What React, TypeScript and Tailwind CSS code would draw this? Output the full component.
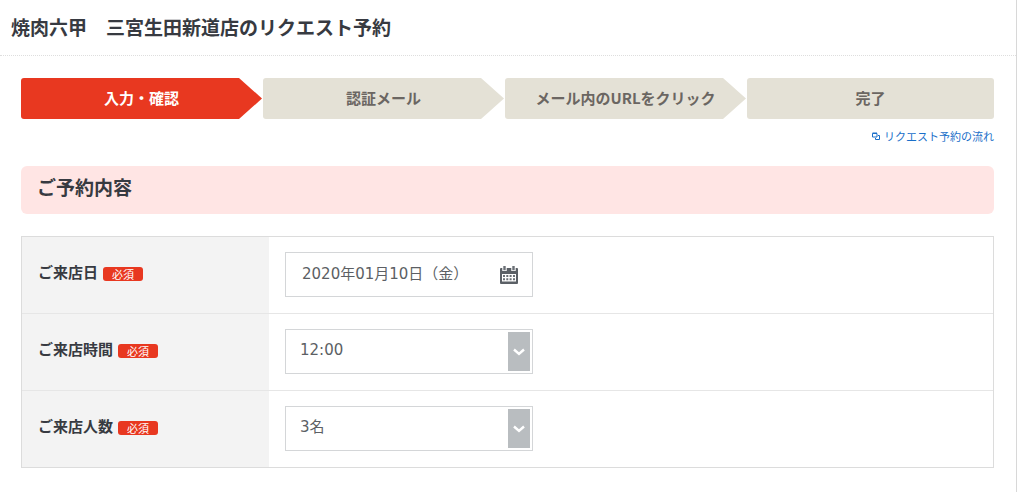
import type { ReactNode } from "react";

const steps = ["入力・確認", "認証メール", "メール内のURLをクリック", "完了"];

function stepClass(index: number) {
  const base =
    "flex h-[41px] items-center justify-center rounded-[3px] text-[15px] font-bold whitespace-nowrap";
  if (index === 0) {
    return `${base} bg-[#e83820] text-white [clip-path:polygon(0_0,calc(100%-23px)_0,100%_50%,calc(100%-23px)_100%,0_100%)]`;
  }
  if (index === steps.length - 1) {
    return `${base} bg-[#e4e1d6] text-[#6b6662]`;
  }
  return `${base} bg-[#e4e1d6] text-[#6b6662] [clip-path:polygon(0_0,calc(100%-23px)_0,100%_50%,calc(100%-23px)_100%,0_100%)]`;
}

function CalendarIcon() {
  return (
    <svg width="20" height="18" viewBox="0 0 20 18" aria-hidden="true">
      <path d="M2 2h16q1 0 1 1v14q0 1-1 1H2q-1 0-1-1V3q0-1 1-1z" fill="#5b6066" />
      <path d="M3 8h14v7.500H3z" fill="#fff" />
      <path d="M3.300 0h4.400v5H3.300zM12.300 0h4.400v5h-4.400z" fill="#fff" />
      <path d="M4.300 0h2.400v4.200H4.300zM13.300 0h2.400v4.200h-2.400z" fill="#6b7076" />
      <path
        d="M4 9h2v2H4zM7.300 9h2v2h-2zM10.600 9h2v2h-2zM14 9h2v2h-2zM4 12.300h2v2H4zM7.300 12.300h2v2h-2zM10.600 12.300h2v2h-2zM14 12.300h2v2h-2z"
        fill="#6b7076"
      />
    </svg>
  );
}

function WindowIcon() {
  return (
    <svg width="8" height="8" viewBox="0 0 8 8" fill="none" stroke="#1a6fc9" aria-hidden="true">
      <path d="M.5 1.500h4.500v3.500H.5zM.5 1h4.500" />
      <path d="M6 3.500h1.500v4H3.500V6" />
    </svg>
  );
}

function Row({ id, label, last, children }: { id: string; label: string; last?: boolean; children: ReactNode }) {
  const line = last ? "" : "border-b border-[#e6e6e6]";
  return (
    <tr>
      <th scope="row" className={`w-[247px] bg-[#f3f3f3] pb-[6px] pl-4 text-left align-middle ${line}`}>
        <div className="flex items-center gap-[5px]">
          <label htmlFor={id} className="text-[15px] leading-5 font-bold">
            {label}
          </label>
          <span className="mt-1 flex h-[14px] w-10 items-center justify-center rounded-[3px] bg-[#e83820] text-[11px] leading-none font-normal text-white">
            必須
          </span>
        </div>
      </th>
      <td className={`px-4 pt-[15px] pb-4 ${line}`}>
        <div className="relative w-[248px]">{children}</div>
      </td>
    </tr>
  );
}

const fieldClass =
  "block h-[45px] w-full appearance-none border border-[#d4d6d8] bg-white font-['DejaVu_Sans','Noto_Sans_CJK_JP',sans-serif] text-[15px] text-[#5c5f64] outline-none";

function Select({ id, options }: { id: string; options: string[] }) {
  return (
    <>
      <select id={id} className={`${fieldClass} pr-7 pb-0.5 pl-[14px]`}>
        {options.map((o) => (
          <option key={o}>{o}</option>
        ))}
      </select>
      <span className="pointer-events-none absolute inset-y-[3px] right-[3px] flex w-[22px] items-center justify-center bg-[#b9bdc0]">
        <svg width="12" height="8" viewBox="0 0 12 8" fill="none" stroke="#fff" strokeWidth="2.400" aria-hidden="true">
          <path d="M1 1.500 6 6l5-4.500" />
        </svg>
      </span>
    </>
  );
}

export default function App() {
  return (
    <div className="min-h-screen bg-white pr-[7px] font-['Noto_Sans_CJK_JP',sans-serif] text-[#373a41]">
      <div className="min-h-screen border-r border-[#d8d8d8]">
        <h1 className="flex h-14 items-center border-b border-dotted border-[#dedede] pl-[11px] text-[19px] font-bold">
          焼肉六甲　三宮生田新道店のリクエスト予約
        </h1>
        <main className="pt-[22px] pr-[22px] pb-6 pl-[21px]">
          <ol className="grid grid-cols-[241fr_241fr_241fr_247fr] gap-px">
            {steps.map((s, i) => (
              <li key={s} aria-current={i === 0 ? "step" : undefined} className={stepClass(i)}>
                {s}
              </li>
            ))}
          </ol>
          <div className="mt-[7px] flex h-5 justify-end">
            <a href="#flow" className="flex items-center gap-1 text-[11px] leading-5 text-[#1a6fc9]">
              <WindowIcon />
              リクエスト予約の流れ
            </a>
          </div>
          <h2 className="mt-5 flex h-12 items-center rounded-[6px] bg-[#ffe5e4] pb-[5px] pl-4 text-[19px] font-bold">
            ご予約内容
          </h2>
          <table className="mt-[22px] w-full border-separate border-spacing-0 border border-[#dcdcdc]">
            <tbody>
              <Row id="date" label="ご来店日">
                <input id="date" readOnly defaultValue="2020年01月10日（金）" className={`${fieldClass} pr-10 pb-1 pl-4`} />
                <button
                  type="button"
                  aria-label="カレンダー"
                  className="absolute inset-y-0 right-[14px] flex items-center"
                >
                  <CalendarIcon />
                </button>
              </Row>
              <Row id="time" label="ご来店時間">
                <Select id="time" options={["12:00", "12:30", "13:00"]} />
              </Row>
              <Row id="people" label="ご来店人数" last>
                <Select id="people" options={["3名", "4名", "5名"]} />
              </Row>
            </tbody>
          </table>
        </main>
      </div>
    </div>
  );
}
